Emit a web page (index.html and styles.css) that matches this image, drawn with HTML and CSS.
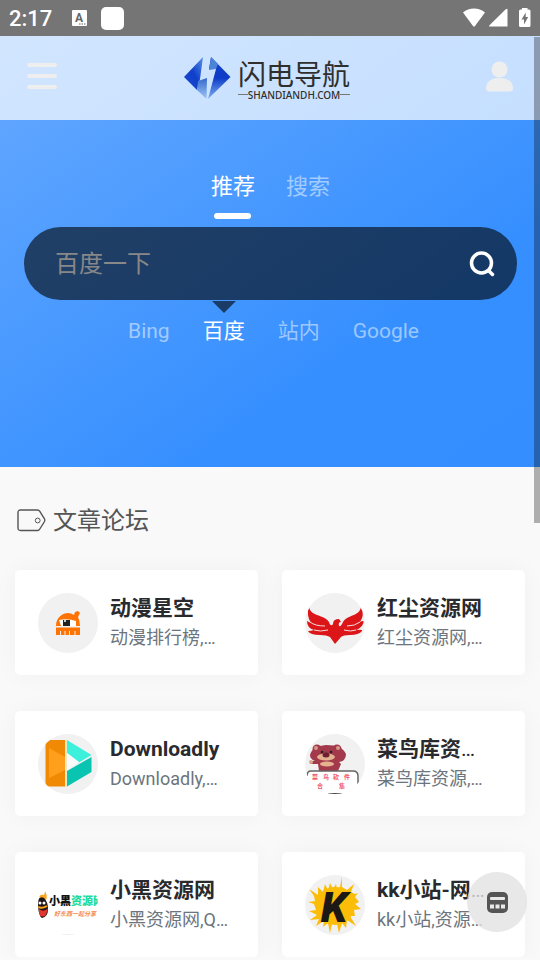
FILE: index.html
```html
<!DOCTYPE html>
<html lang="zh-CN">
<head>
  <meta charset="UTF-8">
  <meta name="viewport" content="width=device-width, initial-scale=1">
  <title>闪电导航</title>
  <link rel="stylesheet" href="styles.css">
</head>
<body>
  <div class="status-bar">
    <span class="time">2:17</span>
    <svg class="status-lang" width="16" height="17" viewBox="0 0 16 17">
      <rect x="1" y="0" width="15" height="16" rx="1" fill="#fff"/>
      <text x="8" y="12" text-anchor="middle" class="lang-letter">A</text>
      <path d="M8 14h1.500M10.500 14h1.500M13 14h1.500" stroke="#666" stroke-width="1.200"/>
    </svg>
    <span class="status-app"></span>
    <svg class="status-signal" width="68" height="20" viewBox="0 0 68 20" fill="#fff">
      <path d="M0 4.500C6 -1 16 -1 22 4.500L11.800 18.200Q11 19 10.200 18.200Z"/>
      <path d="M44.500 1v17.500H26.500Q25.500 18.500 26.500 17.200L42.500 1.500Q44.500 0 44.500 1.500Z"/>
      <path d="M59 1.500V0h5.500v1.500H66q1.500 0 1.500 1.500v14.500q0 1.500-1.500 1.500h-8.500q-1.500 0-1.500-1.500V3q0-1.500 1.500-1.500z"/>
      <path d="M62.700 4.500L58.500 11.500h2.500v5l4.200-7.500h-2.500z" fill="#757575"/>
    </svg>
  </div>

  <div class="top">
    <header class="header">
      <button class="icon-btn menu-btn" type="button" aria-label="菜单">
        <svg width="30" height="28" viewBox="0 0 30 28">
          <path d="M2 3h26M2 14h26M2 25h26" stroke="#eee" stroke-width="4" stroke-linecap="round"/>
        </svg>
      </button>
      <a class="logo" href="#">
        <svg width="47" height="43" viewBox="0 0 47 43">
          <defs>
            <linearGradient id="lg1" x1="1" y1="0" x2="0" y2="1">
              <stop offset="0" stop-color="#5b92e2"/><stop offset=".5" stop-color="#0f3fcb"/><stop offset="1" stop-color="#1d4cd0"/>
            </linearGradient>
            <linearGradient id="lg2" x1="0" y1="0" x2="0" y2="1">
              <stop offset="0" stop-color="#1641c2"/><stop offset=".5" stop-color="#0e3cc9"/><stop offset="1" stop-color="#7fb0ee"/>
            </linearGradient>
            <linearGradient id="lg3" x1="0" y1="0" x2="0" y2="1">
              <stop offset="0" stop-color="#3467cb"/><stop offset="1" stop-color="#9fc6f6"/>
            </linearGradient>
          </defs>
          <path d="M19 0L16 22L13 33L0 20Z" fill="url(#lg1)"/>
          <path d="M27 0L46.500 20L24 42L32 12H25Z" fill="url(#lg2)"/>
          <path d="M27 0L34 7L32 12L25 13Z" fill="#4a83d8"/>
          <path d="M14 24L23 21L22.500 42L13 33Z" fill="url(#lg3)"/>
        </svg>
        <span class="logo-text">
          <span class="logo-name">闪电导航</span>
          <span class="logo-domain">SHANDIANDH.COM</span>
        </span>
      </a>
      <button class="icon-btn user-btn" type="button" aria-label="用户">
        <svg width="27" height="31" viewBox="0 0 27 31" fill="#eee">
          <circle cx="13.500" cy="8.500" r="8"/>
          <path d="M0 27.500C0 20 6 17 13.500 17S27 20 27 27.500Q27 30.500 23.500 30.500H3.500Q0 30.500 0 27.500Z"/>
        </svg>
      </button>
    </header>

    <section class="search-area">
      <div class="tabs">
        <button class="tab active" type="button">推荐</button>
        <button class="tab" type="button">搜索</button>
      </div>
      <form class="search-box">
        <input type="text" placeholder="百度一下" aria-label="百度一下">
        <button class="icon-btn" type="button" aria-label="搜索">
          <svg width="26" height="26" viewBox="0 0 26 26" fill="none" stroke="#fff" stroke-width="3.500" stroke-linecap="round">
            <circle cx="12.500" cy="12" r="10"/>
            <path d="M19.500 19.500l4 4"/>
          </svg>
        </button>
      </form>
      <div class="engines">
        <button class="engine" type="button">Bing</button>
        <button class="engine active" type="button">百度</button>
        <button class="engine" type="button">站内</button>
        <button class="engine" type="button">Google</button>
      </div>
    </section>
  </div>

  <main class="content">
    <h1 class="section-title">
      <svg width="29" height="23" viewBox="0 0 29 23" fill="none" stroke="#555" stroke-width="1.400">
        <path d="M3.500 1H20.500Q22 1 22.800 2.300L27.500 9.800Q28.200 11.200 27.500 12.500L22.800 20Q22 21.500 20.500 21.500H3.500Q1 21.500 1 19V3.500Q1 1 3.500 1Z"/>
        <circle cx="20.700" cy="11.500" r="2.400" stroke-width="1"/>
      </svg>
      <span>文章论坛</span>
    </h1>

    <div class="cards">
      <a class="card" href="#">
        <svg class="avatar" viewBox="0 0 60 60">
          <path d="M18 33C18 24 25 20 30 20Q33 20 36 22L37 19L40 18L42 20L40 24Q42 28 42 33Z" fill="#ff7303"/>
          <path d="M21 27Q30 25 38 28V33H23Z" fill="#fff"/>
          <rect x="25" y="27" width="7" height="6" fill="#222"/>
          <rect x="26" y="27" width="2" height="2" fill="#ccc"/>
          <path d="M18 34.500H42V42H37.500V38H36.500V42H32V38H31V42H27.500V38H26.500V42H23V38H22V42H18Z" fill="#ff7303"/>
        </svg>
        <span class="info"><strong>动漫星空</strong><small>动漫排行榜,…</small></span>
      </a>

      <a class="card" href="#">
        <svg class="avatar" viewBox="0 0 60 60">
          <path d="M4 14C6 24 19 21 24 29C25 33 27 33 28 31Q28 26 34 26L36 29Q33 29 34 33Q36 34 38 29C43 21 54 24 56 14Q60 22 55 29Q60 26 58 31Q56 35 51 37Q58 36 57 38Q54 42 45 42Q38 42 36 44L30 51L25 44Q22 42 15 42Q5 42 3 38Q6 38 9 37Q2 35 2 28L6 30Q1 22 4 14Z" fill="#db1518"/>
          <path d="M5 29Q10 33 20 33M9 37Q15 39 23 37M55 29Q50 33 42 33M51 37Q46 39 39 37" fill="none" stroke="#f1dede" stroke-width="1"/>
        </svg>
        <span class="info"><strong>红尘资源网</strong><small>红尘资源网,…</small></span>
      </a>

      <a class="card" href="#">
        <svg class="avatar" viewBox="0 0 60 60">
          <path d="M10 6H27V52.500H10L7.500 50V9Z" fill="#f08a05"/>
          <path d="M11 14L27 23V36L11 44Z" fill="#ff9f1c"/>
          <path d="M28 6V53" stroke="#ffe2ae" stroke-width="1.500"/>
          <path d="M29 6L53.500 21L41 28.500L29 19Z" fill="#3cf0dc"/>
          <path d="M29 37L53.500 23V38L29 52.500Z" fill="#08c4b0"/>
          <path d="M29 19L41 28L29 36Z" fill="#fafafa"/>
        </svg>
        <span class="info"><strong>Downloadly</strong><small>Downloadly,…</small></span>
      </a>

      <a class="card" href="#">
        <svg class="avatar" viewBox="0 0 60 60">
          <g fill="#a23a4c">
            <circle cx="12" cy="15" r="4.500"/>
            <circle cx="32" cy="15" r="4.500"/>
            <path d="M5 21Q7 12 21 11Q37 11 41 20Q41 27 34 28L36 30L33 37H14L13 30L5 30L5 27L10 27Q5 25 5 21Z"/>
          </g>
          <circle cx="11" cy="14" r="2" fill="#d69b88"/>
          <circle cx="33" cy="14" r="2" fill="#d69b88"/>
          <circle cx="6" cy="28" r="2" fill="#dba68f"/>
          <ellipse cx="21" cy="23" rx="9" ry="3.500" fill="#e5b291"/>
          <ellipse cx="21" cy="21" rx="3.500" ry="2.500" fill="#6b1f30"/>
          <circle cx="17" cy="18" r="1.300" fill="#222"/>
          <circle cx="26" cy="18" r="1.300" fill="#222"/>
          <ellipse cx="22" cy="30" rx="7" ry="2.500" fill="#e5b291"/>
          <rect x="2" y="37" width="51" height="30" rx="4" fill="#fff"/>
          <path d="M53 50H60V60H53ZM0 40H2V60H0Z" fill="#fff"/>
          <path d="M2 42Q2 37 6 37H48Q53 37 53 42V50" fill="none" stroke="#666" stroke-width="1.500"/>
          <g class="tiny-red">
            <text x="7" y="45">菜</text><text x="18" y="45">鸟</text><text x="28" y="45">软</text><text x="39" y="45">件</text>
            <text x="12" y="54">合</text><text x="34" y="54">集</text>
          </g>
          <path d="M23 59.500H37" stroke="#444" stroke-width="1"/>
        </svg>
        <span class="info"><strong>菜鸟库资<span class="more">…</span></strong><small>菜鸟库资源,…</small></span>
      </a>

      <a class="card" href="#">
        <svg class="avatar avatar-white" viewBox="0 0 60 60">
          <path d="M1 22Q2 19 6 20Q7 18 7 16Q10 22 8 25Z" fill="#ffa41b"/>
          <path d="M0 25Q2 21 6 23Q10 27 10 34Q10 42 4 43L0 40Z" fill="#1f1514"/>
          <path d="M1 34Q6 38 10 33L8 40Q5 43 1 40Z" fill="#e0362c"/>
          <circle cx="2" cy="28" r="1.500" fill="#fff"/>
          <circle cx="6" cy="28" r="1.500" fill="#fff"/>
          <path d="M0 32Q4 34 9 31" stroke="#ffa41b" stroke-width="2" fill="none"/>
          <text x="11" y="30" class="mini-name">小黑<tspan fill="#1ddb9c">资源网</tspan></text>
          <text x="16" y="41" class="mini-slogan">好东西一起分享</text>
          <path d="M23 59.500H37" stroke="#eee"/>
        </svg>
        <span class="info"><strong>小黑资源网</strong><small>小黑资源网,Q…</small></span>
      </a>

      <a class="card" href="#">
        <svg class="avatar" viewBox="0 0 60 60">
          <path d="M35 12L37 2L37 12L42 15L49 9L46 17L50 19L53 18L50 22L54 27L50 29L56 34L49 35L50 41L45 41L51 51L42 45L41 53L37 48L34 58L32 49L27 49L25 58L23 48L18 52L19 46L11 51L14 44L5 45L12 40L4 36L11 35L9 29L3 27L10 26L9 21L4 14L13 20L13 12L18 17L20 9L23 15L25 8L28 14L31 9L32 14Z" fill="#fbbd08"/>
          <circle cx="30" cy="31" r="19" fill="#fbbd08"/>
          <text x="29" y="47" text-anchor="middle" class="brush-k">K</text>
        </svg>
        <span class="info"><strong>kk小站-网<span class="more">…</span></strong><small>kk小站,资源…</small></span>
      </a>
    </div>
  </main>

  <button class="float-btn" type="button" aria-label="快捷菜单">
    <svg width="21" height="21" viewBox="0 0 21 21">
      <rect x="0" y="0" width="21" height="21" rx="5" fill="#555"/>
      <rect x="3" y="5" width="15" height="3" rx="1" fill="#e9e9e9"/>
      <path d="M3 12.500h4v4H3zM8.500 12.500h4v4h-4zM14 12.500h4v4h-4z" fill="#e9e9e9"/>
    </svg>
  </button>
  <div class="scroll-thumb"></div>
</body>
</html>
```

FILE: styles.css
```css
:root {
  --font: Roboto, "Noto Sans CJK SC", sans-serif;
  --page-bg: #f9f9f9;
  --box-bg: rgba(0,0,0,0.6);
  --gap: 24px;
}

* { box-sizing: border-box; margin: 0; padding: 0; }
body {
  background: var(--page-bg);
  font-family: var(--font);
  color: #282a2d;
  position: relative;
}
button {
  border: none;
  background: none;
  font-family: inherit;
  cursor: pointer;
}
a { color: inherit; text-decoration: none; }
svg { display: block; flex-shrink: 0; }

/* Status bar */
.status-bar {
  height: 36px;
  background: #757575;
  color: #fff;
  display: flex;
  align-items: center;
  padding: 0 9px;
}
.time { font-size: 22px; font-weight: 500; }
.status-lang { margin-left: 19px; }
.lang-letter { font: 700 12px Roboto, sans-serif; fill: #666; }
.status-app {
  width: 23px;
  height: 23px;
  margin-left: 14px;
  border-radius: 5px;
  background: #fff;
}
.status-signal { margin-left: auto; }

/* Header */
.top { background: linear-gradient(145deg, #66a9ff 0%, #4a9aff 40%, #368fff 70%, #348eff 100%); }
.header {
  height: 84px;
  padding: 0 27px;
  background: rgba(255,255,255,0.7);
  display: flex;
  align-items: center;
  justify-content: space-between;
}
.icon-btn { display: flex; align-items: center; justify-content: flex-end; }
.menu-btn,
.user-btn { padding-bottom: 4px; }
.user-btn { width: 36px; }
.logo { display: flex; align-items: center; gap: 7px; color: #2f302e; }
.logo-text { display: flex; flex-direction: column; padding-top: 6px; }
.logo-name { font-size: 28px; line-height: 27px; }
.logo-domain {
  display: flex;
  align-items: center;
  font: 500 10px/12px "Noto Sans", sans-serif;
}
.logo-domain::before,
.logo-domain::after {
  content: '';
  flex: 1;
  min-width: 8px;
  height: 1px;
  background: #777;
}

/* Search */
.search-area { padding: 51px 23px 121px 24px; }
.tabs { display: flex; justify-content: center; gap: 31px; }
.tab {
  color: rgba(255,255,255,0.5);
  font-size: 22px;
  line-height: 32px;
  display: flex;
  flex-direction: column;
  align-items: center;
}
.tab::after {
  content: '';
  width: 37px;
  height: 6px;
  margin-top: 10px;
  border-radius: 3px;
}
.tab.active { color: #fff; }
.tab.active::after { background: #fff; }
.search-box {
  height: 73px;
  margin-top: 8px;
  padding: 0 22px 0 31px;
  border-radius: 37px;
  background: var(--box-bg);
  display: flex;
  align-items: center;
}
.search-box input {
  flex: 1;
  min-width: 0;
  border: none;
  outline: none;
  background: transparent;
  color: #fff;
  font: 24px var(--font);
}
.search-box input::placeholder { color: #888; }
.engines {
  display: flex;
  justify-content: center;
  gap: 33px;
  margin-top: 16px;
  padding-left: 6px;
}
.engine {
  position: relative;
  color: rgba(255,255,255,0.5);
  font-size: 21px;
  line-height: 30px;
}
.engine.active { color: #fff; }
.engine.active::before {
  content: '';
  position: absolute;
  top: -15px;
  left: 50%;
  transform: translateX(-50%);
  border: 12px solid transparent;
  border-top-color: var(--box-bg);
  border-bottom: none;
}

/* Site cards */
.content { padding: 34px 15px 0; }
.section-title {
  display: flex;
  align-items: center;
  gap: 7px;
  padding-left: 2px;
  color: #555;
  font-size: 24px;
  font-weight: 400;
  line-height: 36px;
}
.section-title span { padding-top: 2px; }
.cards {
  display: grid;
  grid-template-columns: repeat(2, minmax(0, 1fr));
  gap: 36px var(--gap);
  margin-top: 31px;
}
.card {
  display: flex;
  align-items: center;
  gap: 12px;
  height: 105px;
  padding: 0 23px;
  border-radius: 5px;
  background: #fff;
  box-shadow: 0 0 24px rgba(0,0,0,0.04);
}
.avatar {
  width: 60px;
  height: 60px;
  border-radius: 50%;
  background: #f1f1f1;
}
.avatar-white { background: #fff; }
.info { flex: 1; min-width: 0; }
.info strong,
.info small {
  display: block;
  line-height: 30px;
  white-space: nowrap;
  overflow: hidden;
}
.info strong { font-size: 21px; font-weight: 700; }
.info small { font-size: 18px; color: #6c757d; }
.more { font-weight: 400; }
.tiny-red { font: 700 6px "Noto Sans CJK SC", sans-serif; fill: #f0566a; }
.mini-name { font: 900 11px "Noto Sans CJK SC", sans-serif; fill: #111; }
.mini-slogan { font: italic 700 6px "Noto Sans CJK SC", sans-serif; fill: #f58a4b; }
.brush-k { font: italic 900 43px Roboto, sans-serif; fill: #1c1815; }

/* Floating button */
.float-btn {
  position: fixed;
  right: 13px;
  bottom: 28px;
  width: 60px;
  height: 60px;
  border-radius: 50%;
  background: rgba(226,226,226,0.8);
  display: flex;
  align-items: center;
  justify-content: center;
}

.scroll-thumb {
  position: absolute;
  top: 37px;
  right: 0;
  width: 6px;
  height: 486px;
  background: rgba(0,0,0,0.3);
}
```
